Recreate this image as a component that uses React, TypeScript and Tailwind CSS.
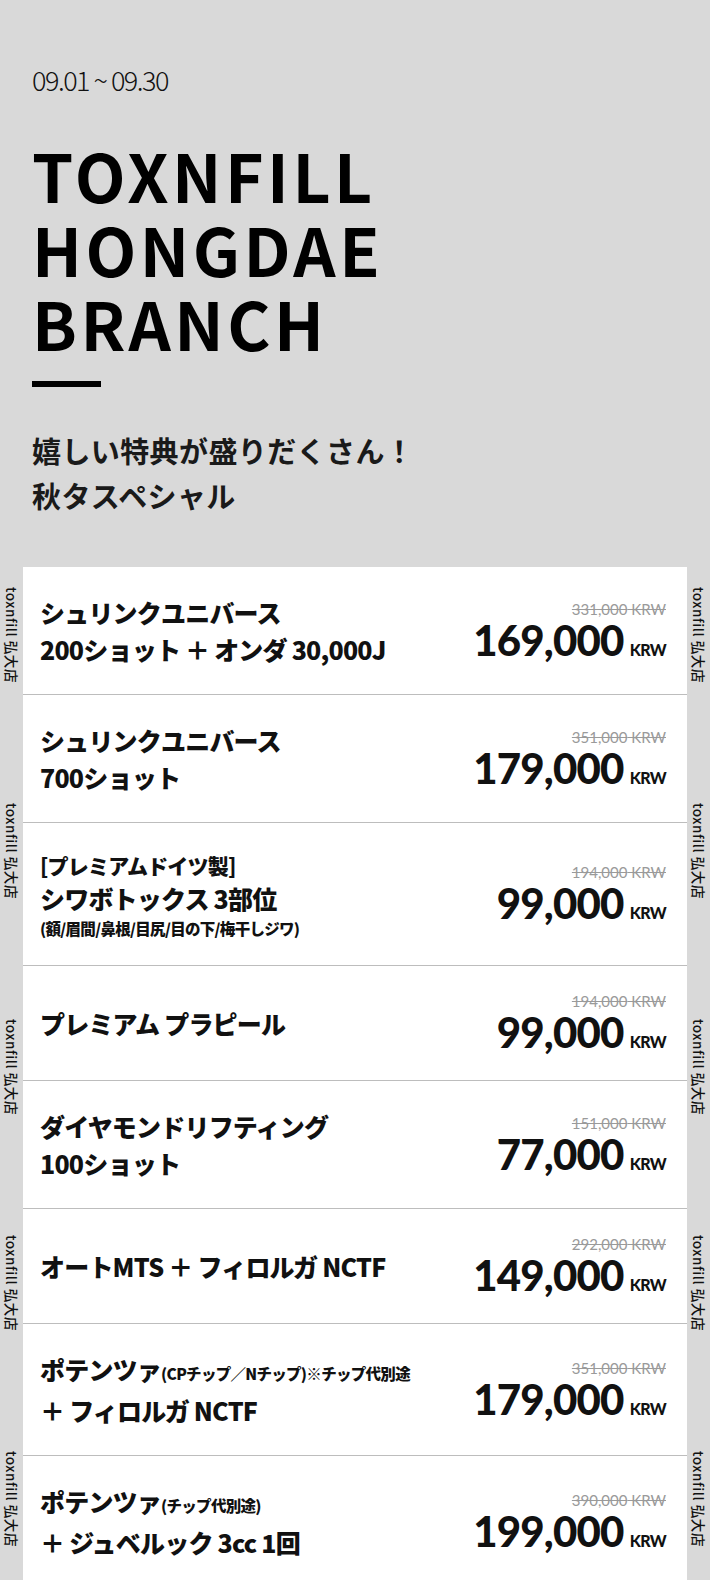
import React from "react";

interface Item {
  pre?: string;
  lines: string[];
  sub?: string;
  note?: string;
  old: string;
  price: string;
}

const items: Item[] = [
  { lines: ["シュリンクユニバース", "200ショット ＋ オンダ 30,000J"], old: "331,000", price: "169,000" },
  { lines: ["シュリンクユニバース", "700ショット"], old: "351,000", price: "179,000" },
  {
    pre: "[プレミアムドイツ製]",
    lines: ["シワボトックス 3部位"],
    note: "(額/眉間/鼻根/目尻/目の下/梅干しジワ)",
    old: "194,000",
    price: "99,000",
  },
  { lines: ["プレミアム プラピール"], old: "194,000", price: "99,000" },
  { lines: ["ダイヤモンドリフティング", "100ショット"], old: "151,000", price: "77,000" },
  { lines: ["オートMTS ＋ フィロルガ NCTF"], old: "292,000", price: "149,000" },
  {
    lines: ["ポテンツァ", "＋ フィロルガ NCTF"],
    sub: "(CPチップ／Nチップ)※チップ代別途",
    old: "351,000",
    price: "179,000",
  },
  {
    lines: ["ポテンツァ", "＋ ジュベルック 3cc 1回"],
    sub: "(チップ代別途)",
    old: "390,000",
    price: "199,000",
  },
];

const SideStrip = () => (
  <div className="w-[23px] shrink-0 flex flex-col items-center pt-[20px] gap-[120px]">
    {[0, 1, 2, 3, 4].map((i) => (
      <span
        key={i}
        className="text-[13.5px] leading-[23px] h-[96px] font-medium text-[#111] tracking-[0.6px] whitespace-nowrap [writing-mode:vertical-rl] [text-orientation:sideways]"
      >
        toxnfill 弘大店
      </span>
    ))}
  </div>
);

const Row = ({ item }: { item: Item }) => (
  <div className="flex items-center justify-between border-b border-[#bdbdbd] pl-[17px] pr-[21px] pt-[27px] pb-[26px]">
    <div className="flex flex-col text-[#111] font-black tracking-[-0.8px]">
      {item.pre && <p className="text-[21px] leading-[30px]">{item.pre}</p>}
      {item.lines.map((line, i) => (
        <p key={i} className="text-[25px] leading-[37px] whitespace-nowrap">
          {line}
          {i === 0 && item.sub && (
            <span className="text-[15.5px] tracking-[-0.7px]">{item.sub}</span>
          )}
        </p>
      ))}
      {item.note && (
        <p className="text-[15.5px] leading-[22px] tracking-[-0.7px]">{item.note}</p>
      )}
    </div>
    <div className="flex flex-col items-end font-['Lato',sans-serif]">
      <span className="text-[15px] leading-[17px] text-[#9a9a9a] line-through">
        {item.old} KRW
      </span>
      <div className="flex items-baseline text-[#111] font-black">
        <span className="text-[42px] leading-[44px] tracking-[-0.8px]">{item.price}</span>
        <span className="ml-[6px] text-[16px] tracking-[-0.6px]">KRW</span>
      </div>
    </div>
  </div>
);

export default function App() {
  return (
    <div className="w-[710px] min-h-[1580px] bg-[#d9d9d9] font-['Noto_Sans_CJK_JP','Noto_Sans',sans-serif]">
      <header className="px-[32px] pt-[65px] pb-[49px]">
        <p className="text-[27px] leading-[30px] font-light tracking-[-1.5px] text-[#111]">
          09.01 ~ 09.30
        </p>
        <h1 className="mt-[42px] text-[66px] leading-[74px] font-bold tracking-[3.5px] text-black">
          TOXNFILL
          <br />
          HONGDAE
          <br />
          BRANCH
        </h1>
        <div className="mt-[22px] w-[69px] h-[6px] bg-black" />
        <p className="mt-[41px] text-[29px] leading-[45px] font-bold tracking-[0.4px] text-[#1a1a1a]">
          嬉しい特典が盛りだくさん！
          <br />
          秋タスペシャル
        </p>
      </header>
      <div className="flex">
        <SideStrip />
        <div className="flex-1 bg-white flex flex-col">
          {items.map((item, i) => (
            <Row key={i} item={item} />
          ))}
        </div>
        <SideStrip />
      </div>
    </div>
  );
}
